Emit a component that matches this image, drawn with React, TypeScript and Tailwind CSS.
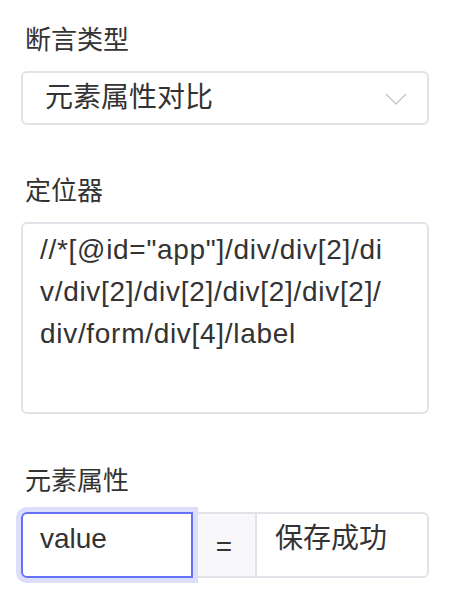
export default function App() {
  return (
    <div
      className="min-h-screen bg-white pl-[21px] pr-[29px] pt-[27px] text-[#333333]"
      style={{ fontFamily: '"Liberation Sans", "Noto Sans CJK SC", sans-serif' }}
    >
      {/* 断言类型 */}
      <div className="pl-[4px] text-[26px] leading-[26px]">断言类型</div>
      <div className="mt-[18px] flex h-[54px] items-center justify-between rounded-[6px] border-2 border-[#e2e2e8] pl-[22px] pr-[20px]">
        <span className="text-[28px] leading-[28px]">元素属性对比</span>
        <svg width="22" height="12" viewBox="0 0 22 12" fill="none" className="mt-[1px]">
          <path d="M1 1 L11 11 L21 1" stroke="#c6c6cd" strokeWidth="1.4" />
        </svg>
      </div>

      {/* 定位器 */}
      <div className="mt-[53px] pl-[4px] text-[26px] leading-[26px]">定位器</div>
      <div className="mt-[18px] h-[192px] rounded-[6px] border-2 border-[#e2e2e8] pl-[17px] pr-[12px] pt-[5px] text-[28px] leading-[42px] tracking-[0.7px]">
        <div>//*[@id="app"]/div/div[2]/di</div>
        <div>v/div[2]/div[2]/div[2]/div[2]/</div>
        <div>div/form/div[4]/label</div>
      </div>

      {/* 元素属性 */}
      <div className="mt-[54px] pl-[4px] text-[26px] leading-[26px]">元素属性</div>
      <div className="mt-[18px] flex h-[66px]">
        <div className="relative z-10 w-[172px] rounded-l-[6px] border-2 border-[#6571f8] pl-[17px] pt-[4px] text-[28px] leading-[42px] shadow-[0_0_0_5px_#dcdefb]">
          value
        </div>
        <div className="flex w-[64px] items-center justify-center border-y-2 border-r-2 border-[#e2e2e8] bg-[#f8f8fa] pt-[4px] text-[28px]">
          =
        </div>
        <div className="flex-1 rounded-r-[6px] border-y-2 border-r-2 border-[#e2e2e8] pl-[18px] pt-[4px] text-[28px] leading-[42px]">
          保存成功
        </div>
      </div>
    </div>
  )
}
